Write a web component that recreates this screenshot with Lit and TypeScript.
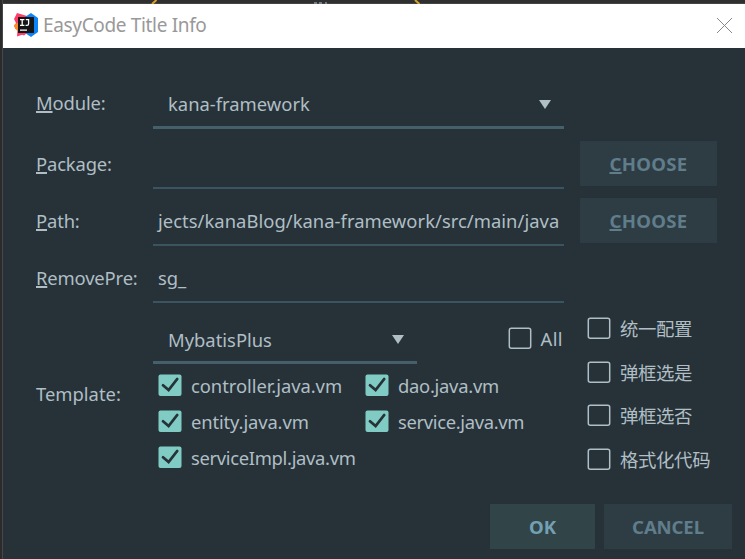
import { LitElement, html, css, svg } from "lit";
import { customElement, property } from "lit/decorators.js";
import { styleMap } from "lit/directives/style-map.js";

const FONT = css`"Noto Sans", "Noto Sans CJK SC", sans-serif`;

@customElement("check-box")
class CheckBox extends LitElement {
  @property() label = "";
  @property({ type: Number }) tracking = 0;
  @property({ type: Boolean }) checked = false;
  static styles = css`
    :host { display: flex; align-items: center; height: 24px; white-space: nowrap; }
    svg { flex: none; width: 24px; height: 24px; margin-right: 9px; }
    .label { position: relative; top: 1px; line-height: 24px; }
  `;
  render() {
    return html`<svg viewBox="0 0 24 24">
        ${this.checked
          ? svg`<rect x="0.5" y="1.4" width="23" height="21.6" rx="2" fill="#80cbc4"/>
              <path d="M5 12.3 L10.6 17 L19.2 6" fill="none" stroke="#263238" stroke-width="2.8" stroke-linecap="round"/>`
          : svg`<rect x="1.3" y="2.2" width="21.4" height="20" rx="2" fill="none" stroke="#b0bec5" stroke-width="1.5"/>`}
      </svg><span class="label" style=${styleMap({ letterSpacing: `${this.tracking}px` })}>${this.label}</span>`;
  }
}

@customElement("combo-box")
class ComboBox extends LitElement {
  @property() value = "";
  static styles = css`
    :host { display: flex; align-items: center; justify-content: space-between; box-sizing: border-box;
      height: 46px; padding: 0 13px 0 15px; border-bottom: 3px solid #455f6b; white-space: nowrap; }
    svg { width: 12px; height: 9px; }
  `;
  render() {
    return html`<span>${this.value}</span>
      <svg viewBox="0 0 12 9"><path d="M0 0H12L6 9Z" fill="#b0bec5"/></svg>`;
  }
}

@customElement("app-root")
class AppRoot extends LitElement {
  static styles = css`
    :host { display: block; width: 745px; height: 559px; box-sizing: border-box; overflow: hidden;
      border-left: 2px solid #2b2b2b; background: #263238;
      color: #b0bec5; font: 18.4px/24px ${FONT}; }
    .window { box-sizing: border-box; height: 559px; border-left: 1px solid #484646; }
    .backdrop { display: block; width: 742px; height: 4px; background: #2f2f2f; }
    .title { display: flex; align-items: center; height: 44px; padding: 0 13px 0 11px; background: #fff; color: #999; }
    .title span { flex: 1; margin: -2px 0 0 5px; font-size: 19px; letter-spacing: -0.34px; }
    .logo { width: 24px; height: 24px; margin-top: -2px; }
    .close { width: 15px; height: 15px; margin-top: -1px; }
    .form { display: grid; grid-template-columns: 117px 411px 137px; grid-template-rows: 49px 45px 45px 45px;
      row-gap: 12px; margin: 35px 0 0 33px; }
    .form label { padding-top: 8px; white-space: nowrap; letter-spacing: -0.15px; }
    .form combo-box { padding-bottom: 1px; }
    .field { box-sizing: border-box; height: 45px; padding: 0 5px; border-bottom: 2px solid #3c545f;
      line-height: 40px; white-space: nowrap; overflow: hidden; }
    .path { text-align: right; letter-spacing: 0.04px; }
    .btn { display: flex; align-items: center; justify-content: center; height: 45px; background: #2e3c43;
      color: #607d8b; font-weight: 700; font-size: 18.6px; }
    .choose { width: 137px; margin: -3px 0 0 16px; letter-spacing: 0.3px; }
    u { text-underline-offset: 1px; text-decoration-thickness: 1.5px; text-decoration-skip-ink: none; }
    .template { display: grid; grid-template-columns: 117px 434px 150px; margin: 15px 0 0 33px; height: 158px; }
    .template > label { padding-top: 64px; }
    .top { display: flex; width: 411px; justify-content: space-between; }
    .top combo-box { width: 264px; }
    .all { margin: 8px 1px 0 0; }
    .files { display: grid; grid-template-columns: 207px 1fr; row-gap: 12px; padding: 9px 0 0 5px; }
    .options { display: flex; flex-direction: column; gap: 19.5px; margin-top: -2px; }
    .actions { display: flex; gap: 9px; margin: 28px 0 0 487px; }
    .ok { width: 105px; background: #314549; color: #75a0b3; }
    .cancel { width: 128px; letter-spacing: -0.15px; }
  `;
  render() {
    const files: [string, number][] = [
      ["controller.java.vm", -0.05],
      ["dao.java.vm", -0.27],
      ["entity.java.vm", -0.13],
      ["service.java.vm", -0.33],
      ["serviceImpl.java.vm", -0.32],
    ];
    const options = ["统一配置", "弹框选是", "弹框选否", "格式化代码"];
    return html`<div class="window">
      <svg class="backdrop" viewBox="0 0 742 4">
        <path d="M0 3.5H742" stroke="#444"/>
        <path d="M149 4L153.5 0M412 0L416.5 4" stroke="#d9a02b" stroke-width="2"/>
        <path d="M311 3H314M316 3H319M322 3H324" stroke="#8b97a8" stroke-width="1.6"/>
      </svg>
      <div class="title">
        <svg class="logo" viewBox="0 0 24 24">
          <path d="M3 0L13 3V20L3 23.5L3.5 17L0 13L2 10L0 6Z" fill="#fe3d68"/>
          <path d="M0 12L5 9V19L1 15.5Z" fill="#fb8a2a"/>
          <path d="M11 4L17 0L24 5V19L17 24L11 20Z" fill="#0b84f5"/>
          <path d="M4 20H13L10 22.5Z" fill="#fe3d68"/>
          <rect x="4" y="4" width="16" height="16" fill="#151515"/>
          <path d="M6 6.6H10.4M8.2 6.6V12.4M6 12.4H10.4M11.8 6.6H15M14.6 6V10.8Q14.6 12.4 13 12.4H11.6M6 17.2H13" fill="none" stroke="#fff" stroke-width="1.3"/>
        </svg>
        <span>EasyCode Title Info</span>
        <svg class="close" viewBox="0 0 15 15"><path d="M0 0L15 15M15 0L0 15" stroke="#888" stroke-width="1"/></svg>
      </div>
      <div class="form">
        <label><u>M</u>odule:</label><combo-box value="kana-framework"></combo-box><i></i>
        <label><u>P</u>ackage:</label><div class="field"></div><div class="btn choose"><span><u>C</u>HOOSE</span></div>
        <label><u>P</u>ath:</label><div class="field path">jects/kanaBlog/kana-framework/src/main/java</div><div class="btn choose"><span><u>C</u>HOOSE</span></div>
        <label><u>R</u>emovePre:</label><div class="field">sg_</div>
      </div>
      <div class="template">
        <label>Template:</label>
        <div>
          <div class="top"><combo-box value="MybatisPlus"></combo-box><check-box class="all" label="All" tracking="0.4"></check-box></div>
          <div class="files">${files.map(([name, tracking]) => html`<check-box checked label=${name} tracking=${tracking}></check-box>`)}</div>
        </div>
        <div class="options">${options.map((o) => html`<check-box label=${o} tracking="-0.35"></check-box>`)}</div>
      </div>
      <div class="actions"><div class="btn ok">OK</div><div class="btn cancel">CANCEL</div></div>
    </div>`;
  }
}
